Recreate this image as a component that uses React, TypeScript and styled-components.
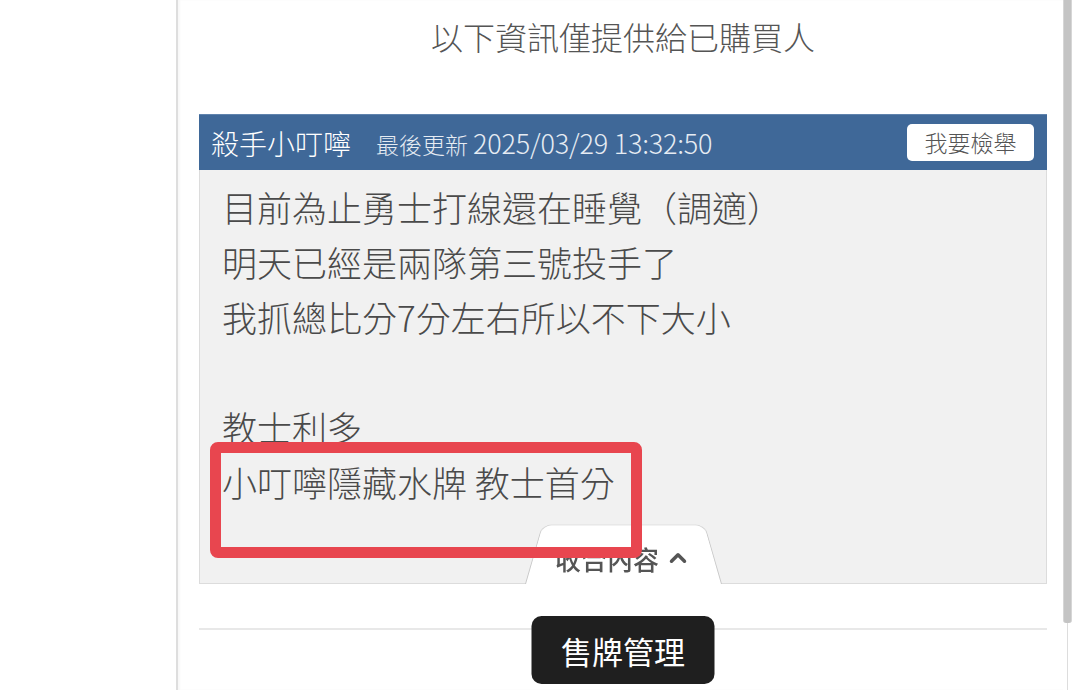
import type { FC } from 'react';
import styled, { createGlobalStyle } from 'styled-components';
import { ChevronUp } from 'lucide-react';

const GlobalStyle = createGlobalStyle`
	html, body {
		margin: 0;
		padding: 0;
		background: #ffffff;
	}
	body {
		font-family: 'Noto Sans CJK TC', 'Noto Sans', sans-serif;
	}
`;

const lines = [
	'目前為止勇士打線還在睡覺（調適）',
	'明天已經是兩隊第三號投手了',
	'我抓總比分7分左右所以不下大小',
	'',
	'教士利多',
	'小叮嚀隱藏水牌 教士首分',
];

export const App: FC = () => {
	return (
		<>
			<GlobalStyle />
			<Page>
				<LeftGutter />
				<Panel>
					<Notice>以下資訊僅提供給已購買人</Notice>
					<Card>
						<CardHeader>
							<Author>殺手小叮嚀</Author>
							<Updated>
								最後更新 <Stamp>2025/03/29 13:32:50</Stamp>
							</Updated>
							<ReportButton>我要檢舉</ReportButton>
						</CardHeader>
						<CardBody>
							{lines.map((line, i) => (
								<Line key={i}>{line || '\u00a0'}</Line>
							))}
							<CollapseTab>
								<span>收合內容</span>
								<ChevronUp size={26} strokeWidth={3.2} />
							</CollapseTab>
							<Highlight />
						</CardBody>
					</Card>
					<FooterBar>
						<ManageButton>售牌管理</ManageButton>
					</FooterBar>
				</Panel>
				<ScrollTrack>
					<ScrollThumb />
				</ScrollTrack>
			</Page>
		</>
	);
};

export default App;

const Page = styled.div`
	display: flex;
	width: 1080px;
	height: 690px;
	overflow: hidden;
	background: #fff;
`;

const LeftGutter = styled.div`
	width: 176px;
	flex-shrink: 0;
`;

const Panel = styled.div`
	width: 887px;
	flex-shrink: 0;
	box-sizing: border-box;
	border-left: 2px solid #dedede;
	box-shadow: inset 2px 0 2px rgba(0, 0, 0, 0.03);
	padding: 0 16px 0 21px;
	display: flex;
	flex-direction: column;
`;

const Notice = styled.div`
	padding-top: 14px;
	font-size: 32px;
	font-weight: 300;
	line-height: 44px;
	color: #555555;
	text-align: center;
`;

const Card = styled.div`
	margin-top: 56px;
	width: 848px;
	display: flex;
	flex-direction: column;
`;

const CardHeader = styled.div`
	height: 56px;
	box-sizing: border-box;
	background: #3f6898;
	display: flex;
	align-items: center;
	padding: 0 13px 0 12px;
	border-top: 1px solid #5f83ad;
`;

const Author = styled.span`
	font-size: 28px;
	font-weight: 300;
	color: #ffffff;
	margin-right: 25px;
`;

const Updated = styled.span`
	font-size: 23px;
	font-weight: 300;
	color: #e6ecf3;
	flex: 1;
`;

const Stamp = styled.span`
	font-size: 27px;
	letter-spacing: -0.2px;
`;

const ReportButton = styled.button`
	width: 127px;
	height: 37px;
	border: none;
	border-radius: 5px;
	background: #ffffff;
	color: #555555;
	font-family: inherit;
	font-size: 23px;
	font-weight: 300;
	line-height: 37px;
	padding: 0;
`;

const CardBody = styled.div`
	position: relative;
	background: #f1f1f1;
	border: 1px solid #dcdcdc;
	border-top: none;
	padding-top: 9px;
	display: flex;
	flex-direction: column;
`;

const Line = styled.div`
	padding-left: 22px;
	font-size: 35px;
	font-weight: 300;
	line-height: 55px;
	color: #4a4a4a;
	white-space: pre;
`;

const CollapseTab = styled.div`
	position: relative;
	align-self: center;
	margin-top: 15px;
	margin-bottom: -1px;
	width: 197px;
	height: 60px;
	display: flex;
	align-items: center;
	justify-content: center;
	gap: 6px;
	padding-top: 8px;
	box-sizing: border-box;
	color: #555555;
	font-size: 26px;
	font-weight: 500;

	&::before {
		content: '';
		position: absolute;
		left: 0;
		right: 0;
		bottom: 0;
		height: 72px;
		background: #ffffff;
		border: 1px solid #c9c9c9;
		border-bottom: none;
		border-radius: 12px 12px 0 0;
		transform: perspective(60px) rotateX(10deg);
		transform-origin: bottom;
	}

	& > * {
		position: relative;
	}
`;

const Highlight = styled.div`
	position: absolute;
	left: 10px;
	top: 272px;
	width: 432px;
	height: 116px;
	box-sizing: border-box;
	border: 11px solid #e8464f;
	border-radius: 8px;
	pointer-events: none;
`;

const FooterBar = styled.div`
	position: relative;
	margin-top: 44px;
	width: 848px;
	border-top: 2px solid #e8e8e8;
`;

const ManageButton = styled.button`
	position: absolute;
	top: -14px;
	left: 50%;
	transform: translateX(-50%);
	width: 183px;
	height: 68px;
	border: none;
	border-radius: 10px;
	background: #1f1f1f;
	color: #ffffff;
	font-family: inherit;
	font-size: 31px;
	padding: 0;
`;

const ScrollTrack = styled.div`
	width: 9px;
	flex-shrink: 0;
	display: flex;
	flex-direction: column;
	align-items: center;

	&::after {
		content: '';
		flex: 1;
		width: 1px;
		background: #dddddd;
	}
`;

const ScrollThumb = styled.div`
	width: 9px;
	height: 623px;
	background: #c4c4c4;
	border-left: 1px solid #d6d6d6;
	border-right: 1px solid #d6d6d6;
	box-sizing: border-box;
	border-radius: 0 0 3px 3px;
`;
